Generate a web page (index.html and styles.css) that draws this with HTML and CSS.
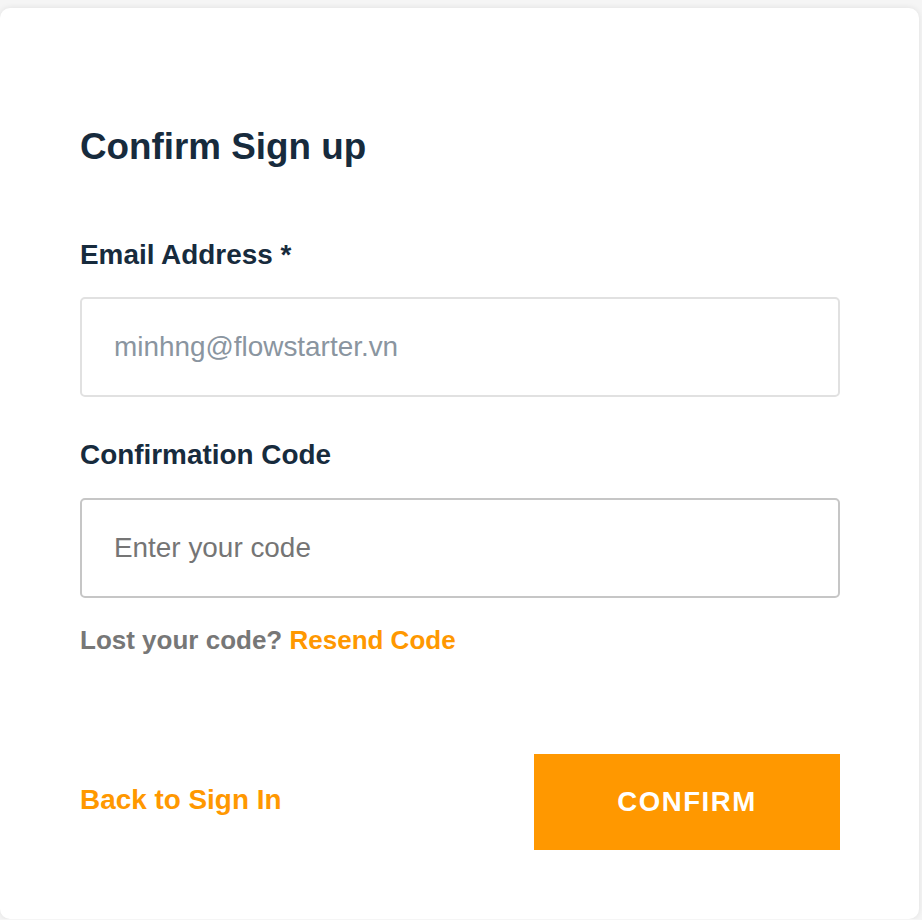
FILE: index.html
```html
<!DOCTYPE html>
<html lang="en">
<head>
<meta charset="utf-8">
<title>Confirm Sign up</title>
<link rel="stylesheet" href="styles.css">
</head>
<body>
<main class="card">
  <h1 class="title">Confirm Sign up</h1>
  <form class="form">
    <label class="label label-email" for="email">Email Address *</label>
    <input class="field field-email" id="email" type="text" value="minhng@flowstarter.vn" readonly>
    <label class="label label-code" for="code">Confirmation Code</label>
    <input class="field field-code" id="code" type="text" placeholder="Enter your code">
    <p class="hint">Lost your code? <a class="link" href="#">Resend Code</a></p>
    <div class="actions">
      <a class="link back" href="#">Back to Sign In</a>
      <button class="btn" type="button">CONFIRM</button>
    </div>
  </form>
</main>
</body>
</html>
```

FILE: styles.css
```css
html, body {
  margin: 0;
  padding: 0;
}
body {
  background: #f5f5f5;
  font-family: "Liberation Sans", Arial, sans-serif;
  overflow: hidden;
}
.card {
  box-sizing: border-box;
  margin-top: 8px;
  width: 919px;
  height: 911px;
  background: #ffffff;
  border-radius: 10px;
  box-shadow: 0 0 6px rgba(0, 0, 0, 0.09);
  padding: 118px 79px 0 80px;
}
.title {
  margin: 0;
  font-size: 36.8px;
  line-height: 42px;
  font-weight: 700;
  color: #172b3d;
}
.form {
  display: flex;
  flex-direction: column;
}
.label {
  display: block;
  font-size: 27.9px;
  line-height: 32px;
  font-weight: 700;
  color: #172b3d;
}
.label-email {
  margin-top: 71px;
}
.label-code {
  margin-top: 42px;
}
.field {
  box-sizing: border-box;
  margin-top: 26px;
  width: 760px;
  height: 100px;
  padding: 0 32px;
  border: 2px solid #e1e1e1;
  border-radius: 5px;
  background: #fff;
  font-family: "Liberation Sans", Arial, sans-serif;
  font-size: 27.9px;
  outline: none;
}
.field-email {
  color: #8a95a0;
}
.field-code {
  margin-top: 27px;
  border-color: #c6c6c6;
  color: #333;
}
.field-code::placeholder {
  color: #757575;
  opacity: 1;
}
.hint {
  margin: 27px 0 0;
  font-size: 26px;
  line-height: 30px;
  font-weight: 700;
  color: #777777;
}
.link {
  color: #ff9800;
  text-decoration: none;
  font-weight: 700;
}
.actions {
  margin-top: 99px;
  display: flex;
  justify-content: space-between;
  align-items: center;
}
.back {
  font-size: 27.9px;
  line-height: 32px;
  margin-top: -5px;
}
.btn {
  width: 306px;
  height: 96px;
  border: none;
  border-radius: 0;
  background: #ff9800;
  color: #ffffff;
  font-family: "Liberation Sans", Arial, sans-serif;
  font-size: 27.6px;
  font-weight: 700;
  letter-spacing: 1.5px;
  cursor: pointer;
}
```
